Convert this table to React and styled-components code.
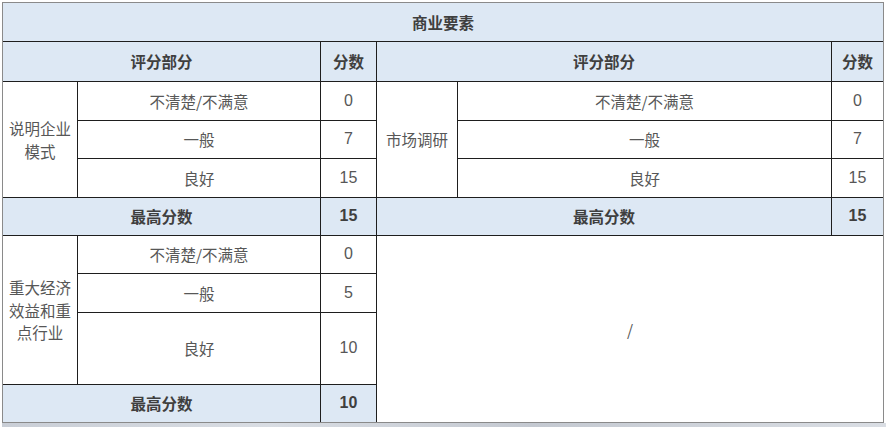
import React from "react";
import styled, { createGlobalStyle } from "styled-components";

const Global = createGlobalStyle`
  html, body { margin: 0; padding: 0; background: #ffffff; }
  body { font-family: "Noto Sans CJK SC", "Noto Sans", sans-serif; }
`;

const Page = styled.div`
  width: 886px;
  height: 427px;
  overflow: hidden;
  padding: 2px 0 0 2px;
  box-sizing: border-box;
  display: flex;
  flex-direction: column;
`;

const Grid = styled.div`
  display: grid;
  width: 882px;
  box-sizing: border-box;
  grid-template-columns: 74px 242px 55px 80px 373px 51px;
  grid-template-rows: 38px 39px 38px 37px 38px 37px 37px 38px 71px 37px;
  gap: 1px;
  background: #1e1e1e;
  border: 1px solid #8a8a8a;
`;

const Cell = styled.div`
  grid-column: ${(p) => p.$col};
  grid-row: ${(p) => p.$row};
  background: ${(p) => (p.$head ? "#dde8f4" : "#ffffff")};
  color: ${(p) => (p.$bold ? "#3f3f3f" : "#575757")};
  font-weight: ${(p) => (p.$bold ? 700 : 400)};
  font-size: 15.5px;
  line-height: 22.5px;
  display: flex;
  align-items: center;
  justify-content: center;
  text-align: center;
  padding: ${(p) => (p.$label ? "0 5px" : "0")};
  word-break: break-all;
`;

const Num = styled(Cell)`
  font-family: "Liberation Sans", "Noto Sans", sans-serif;
  font-size: 16px;
`;

const Strip = styled.div`
  flex: 1;
  background: linear-gradient(90deg, #c9ced6, #d9dde3 30%, #c4c9d1 60%, #dadee4);
`;

export default function App() {
  return (
    <Page>
      <Global />
      <Grid>
        <Cell $col="1 / 7" $row="1" $head $bold>商业要素</Cell>

        <Cell $col="1 / 3" $row="2" $head $bold>评分部分</Cell>
        <Cell $col="3" $row="2" $head $bold>分数</Cell>
        <Cell $col="4 / 6" $row="2" $head $bold>评分部分</Cell>
        <Cell $col="6" $row="2" $head $bold>分数</Cell>

        <Cell $col="1" $row="3 / 6" $label>说明企业模式</Cell>
        <Cell $col="2" $row="3">不清楚/不满意</Cell>
        <Num $col="3" $row="3">0</Num>
        <Cell $col="2" $row="4">一般</Cell>
        <Num $col="3" $row="4">7</Num>
        <Cell $col="2" $row="5">良好</Cell>
        <Num $col="3" $row="5">15</Num>

        <Cell $col="4" $row="3 / 6" $label>市场调研</Cell>
        <Cell $col="5" $row="3">不清楚/不满意</Cell>
        <Num $col="6" $row="3">0</Num>
        <Cell $col="5" $row="4">一般</Cell>
        <Num $col="6" $row="4">7</Num>
        <Cell $col="5" $row="5">良好</Cell>
        <Num $col="6" $row="5">15</Num>

        <Cell $col="1 / 3" $row="6" $head $bold>最高分数</Cell>
        <Num $col="3" $row="6" $head $bold>15</Num>
        <Cell $col="4 / 6" $row="6" $head $bold>最高分数</Cell>
        <Num $col="6" $row="6" $head $bold>15</Num>

        <Cell $col="1" $row="7 / 10" $label>重大经济效益和重点行业</Cell>
        <Cell $col="2" $row="7">不清楚/不满意</Cell>
        <Num $col="3" $row="7">0</Num>
        <Cell $col="2" $row="8">一般</Cell>
        <Num $col="3" $row="8">5</Num>
        <Cell $col="2" $row="9">良好</Cell>
        <Num $col="3" $row="9">10</Num>

        <Cell $col="1 / 3" $row="10" $head $bold>最高分数</Cell>
        <Num $col="3" $row="10" $head $bold>10</Num>

        <Cell $col="4 / 7" $row="7 / 11">/</Cell>
      </Grid>
      <Strip />
    </Page>
  );
}
